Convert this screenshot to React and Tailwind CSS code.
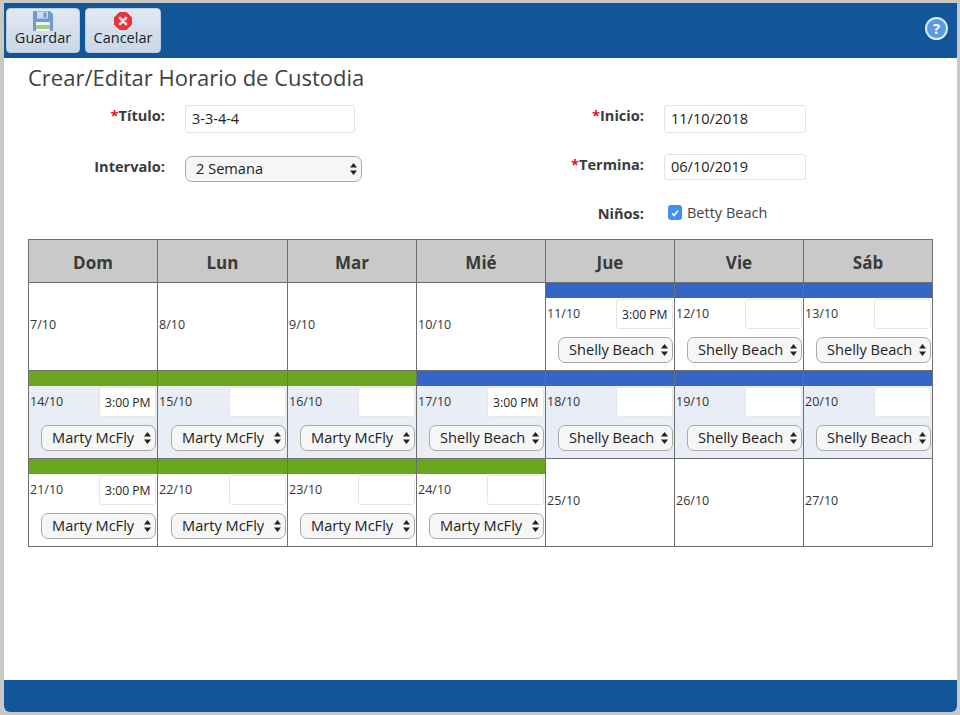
import React from "react";

const font = "font-['Open_Sans',sans-serif]";

const days = ["Dom", "Lun", "Mar", "Mié", "Jue", "Vie", "Sáb"];

const weeks = [
  [
    { date: "7/10" },
    { date: "8/10" },
    { date: "9/10" },
    { date: "10/10" },
    { date: "11/10", who: "Shelly Beach", time: "3:00 PM" },
    { date: "12/10", who: "Shelly Beach" },
    { date: "13/10", who: "Shelly Beach" },
  ],
  [
    { date: "14/10", who: "Marty McFly", time: "3:00 PM", shade: true },
    { date: "15/10", who: "Marty McFly", shade: true },
    { date: "16/10", who: "Marty McFly", shade: true },
    { date: "17/10", who: "Shelly Beach", time: "3:00 PM", shade: true },
    { date: "18/10", who: "Shelly Beach", shade: true },
    { date: "19/10", who: "Shelly Beach", shade: true },
    { date: "20/10", who: "Shelly Beach", shade: true },
  ],
  [
    { date: "21/10", who: "Marty McFly", time: "3:00 PM" },
    { date: "22/10", who: "Marty McFly" },
    { date: "23/10", who: "Marty McFly" },
    { date: "24/10", who: "Marty McFly" },
    { date: "25/10" },
    { date: "26/10" },
    { date: "27/10" },
  ],
];

const Arrows = () => (
  <svg width="7" height="12" viewBox="0 0 7 12" className="absolute right-[5px] top-1/2 -translate-y-1/2 pointer-events-none">
    <path d="M3.5 0 L7 4.6 H0 Z M3.5 12 L7 7.4 H0 Z" fill="#222" />
  </svg>
);

const Select = ({ value, className }) => (
  <div className={`relative ${className}`}>
    <select
      defaultValue={value}
      className="appearance-none w-full h-full rounded-[7px] border border-[#a9a9a9] bg-[#f6f6f6] pl-[10px] text-[14.6px] text-[#222] outline-none"
    >
      <option>{value}</option>
    </select>
    <Arrows />
  </div>
);

const SaveIcon = () => (
  <svg width="20" height="20" viewBox="0 0 20 20">
    <path d="M0 1 Q0 0 1 0 H17 L20 3 V19 Q20 20 19 20 H1 Q0 20 0 19 Z" fill="#6f9bd3" />
    <rect x="4" y="0.5" width="11" height="7" fill="#cddbed" />
    <rect x="10.5" y="1.5" width="3" height="5" fill="#6f9bd3" />
    <rect x="3" y="11" width="14" height="9" fill="#eef2ea" />
    <rect x="3" y="14" width="14" height="4" fill="#a5cc85" />
  </svg>
);

const CancelIcon = () => (
  <svg width="18" height="18" viewBox="0 0 18 18">
    <path d="M5.5 0.5 H12.5 L17.5 5.5 V12.5 L12.5 17.5 H5.5 L0.5 12.5 V5.5 Z" fill="#e8343a" strokeLinejoin="round" stroke="#e8343a" />
    <path d="M6 6 L12 12 M12 6 L6 12" stroke="#fbe3e3" strokeWidth="2.6" strokeLinecap="round" />
  </svg>
);

const ToolButton = ({ icon, label, className }) => (
  <button className={`flex flex-col items-center justify-start h-[45px] pt-[2px] rounded-[4px] border border-[#b9cde2] bg-gradient-to-b from-[#e2e9f2] to-[#c9d7e7] text-[14.5px] leading-[19px] text-[#222] ${className}`}>
    <span className="flex h-[20px] items-center">{icon}</span>
    <span className="-mt-[3px]">{label}</span>
  </button>
);

const Label = ({ required, className = "", children }) => (
  <label className={`text-right text-[14.6px] leading-[20px] font-bold text-[#3a3a3a] ${className}`}>
    {required && <span className="text-[#e8102a]">*</span>}
    {children}
  </label>
);

const Cell = ({ date, who, time, color, shade }) => {
  if (!who) {
    return (
      <td className="h-[88px] border border-[#6f6f6f] bg-white p-0 pb-[7px] align-middle">
        <span className="ml-px text-[12.5px] text-[#333]">{date}</span>
      </td>
    );
  }
  return (
    <td className={`h-[88px] border border-[#6f6f6f] p-0 align-top ${shade ? "bg-[#e9edf5]" : "bg-white"}`}>
      <div className={`h-[15px] ${color}`} />
      <div className="flex items-start justify-between mt-px">
        <span className="ml-px mt-[6px] text-[12.5px] text-[#333]">{date}</span>
        <input
          readOnly
          value={time || ""}
          className="w-[57px] h-[30px] mr-px rounded-[3px] border border-[#e6e6e6] bg-white pl-[5px] text-[12.2px] text-[#222] outline-none"
        />
      </div>
      <div className="flex justify-end mt-[8px]">
        <Select value={who} className="w-[115px] h-[26px] mr-px" />
      </div>
    </td>
  );
};

const stripColor = (who) => (who === "Marty McFly" ? "bg-[#69a51f]" : "bg-[#3566c6]");

export default function App() {
  return (
    <div className={`h-[715px] w-[960px] overflow-hidden bg-[#c8c8c4] pt-[3px] pl-[4px] pr-[3px] ${font}`}>
      <div className="flex h-[709px] flex-col overflow-hidden rounded-b-[6px] bg-white">
        <div className="flex h-[55px] shrink-0 items-start bg-[#125699] pl-[2px] pt-[5px]">
          <ToolButton icon={<SaveIcon />} label="Guardar" className="w-[74px]" />
          <ToolButton icon={<CancelIcon />} label="Cancelar" className="w-[76px] ml-[5px]" />
          <div className="ml-auto mr-[9px] mt-[9px] flex h-[23px] w-[23px] items-center justify-center rounded-full border-2 border-[#dce9f6] bg-[#5a9be0] text-[15px] font-bold text-white">
            ?
          </div>
        </div>

        <div className="flex-1 pl-[24px] pr-[24px]">
          <h1 className="mt-[3px] text-[22px] leading-[32px] text-[#3f3f3f]">Crear/Editar Horario de Custodia</h1>

          <div className="mt-[12px] grid grid-cols-[137px_299px_140px_1fr] gap-x-5 items-start">
            <Label required>Título:</Label>
            <input readOnly value="3-3-4-4" className="h-[28px] w-[170px] rounded-[3px] border border-[#e2e2e2] pl-[6px] pb-[2px] text-[14.5px] text-[#222] outline-none" />
            <Label required>Inicio:</Label>
            <input readOnly value="11/10/2018" className="h-[28px] w-[142px] rounded-[3px] border border-[#e2e2e2] pl-[6px] pb-[2px] text-[14.5px] text-[#222] outline-none" />
          </div>

          <div className="mt-[21px] grid grid-cols-[137px_299px_140px_1fr] gap-x-5 items-start">
            <Label className="mt-[2px]">Intervalo:</Label>
            <Select value="2 Semana" className="mt-[2px] h-[26px] w-[177px]" />
            <Label required>Termina:</Label>
            <input readOnly value="06/10/2019" className="h-[26px] w-[142px] rounded-[3px] border border-[#e2e2e2] pl-[6px] pb-[2px] text-[14.5px] text-[#222] outline-none" />
          </div>

          <div className="mt-[20px] grid grid-cols-[137px_299px_140px_1fr] gap-x-5 items-center">
            <span />
            <span />
            <Label>Niños:</Label>
            <div className="flex items-center gap-[5px] pl-[4px] text-[14.5px] leading-[21px] text-[#444]">
              <span className="flex h-[15px] w-[14px] items-center justify-center rounded-[3px] bg-[#3f8ff5]">
                <svg width="10" height="10" viewBox="0 0 10 10">
                  <path d="M2 5.2 L4.2 7.5 L8 2.5" fill="none" stroke="#fff" strokeWidth="1.5" />
                </svg>
              </span>
              Betty Beach
            </div>
          </div>

          <table className="mt-[16px] w-[904px] table-fixed border-collapse">
            <colgroup>
              <col className="w-[129px]" />
              <col className="w-[130px]" />
              <col className="w-[129px]" />
              <col className="w-[129px]" />
              <col className="w-[129px]" />
              <col className="w-[129px]" />
              <col className="w-[129px]" />
            </colgroup>
            <thead>
              <tr>
                {days.map((d) => (
                  <th key={d} className="h-[43px] border border-[#6f6f6f] bg-[#c9c9c9] pt-[3px] text-[17px] font-bold text-[#3a3a3a]">
                    {d}
                  </th>
                ))}
              </tr>
            </thead>
            <tbody>
              {weeks.map((week, i) => (
                <tr key={i}>
                  {week.map((c) => (
                    <Cell key={c.date} {...c} color={stripColor(c.who)} />
                  ))}
                </tr>
              ))}
            </tbody>
          </table>
        </div>

        <div className="h-[32px] shrink-0 bg-[#125699]" />
      </div>
    </div>
  );
}
